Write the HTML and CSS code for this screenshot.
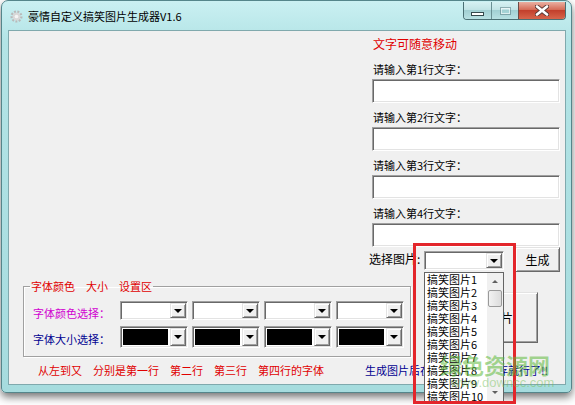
FILE: index.html
```html
<!DOCTYPE html>
<html lang="zh-CN">
<head>
<meta charset="utf-8">
<title>豪情自定义搞笑图片生成器V1.6</title>
<link rel="stylesheet" href="styles.css">
</head>
<body>
<div class="window">
    <div class="titlebar">
        <svg class="appicon" viewBox="0 0 14 14">
            <circle cx="7" cy="7" r="5" fill="none" stroke="#b9b9b9" stroke-width="3" stroke-dasharray="2 1.4"/>
            <circle cx="7" cy="7" r="4.2" fill="#d8d8d8"/>
            <circle cx="7" cy="7" r="2" fill="#f4f4f4"/>
        </svg>
        <span class="title">豪情自定义搞笑图片生成器V1.6</span>
        <div class="caption">
            <div class="cbtn min"><span></span></div>
            <div class="cbtn max"><span></span></div>
            <div class="cbtn close">
                <svg width="14" height="11" viewBox="0 0 14 11">
                    <path d="M2 1.5 L12 9.5 M12 1.5 L2 9.5" stroke="#5a3a36" stroke-width="4.4" stroke-linecap="round"/>
                    <path d="M2 1.5 L12 9.5 M12 1.5 L2 9.5" stroke="#fff" stroke-width="2.6" stroke-linecap="round"/>
                </svg>
            </div>
        </div>
    </div>

    <div class="client">
        <div class="top">
            <div class="canvas"></div>
            <div class="side">
                <p class="hint">文字可随意移动</p>
                <p class="lbl">请输入第1行文字：</p>
                <div class="textbox"></div>
                <p class="lbl">请输入第2行文字：</p>
                <div class="textbox"></div>
                <p class="lbl">请输入第3行文字：</p>
                <div class="textbox"></div>
                <p class="lbl">请输入第4行文字：</p>
                <div class="textbox last"></div>
                <div class="pickrow">
                    <span class="picklbl">选择图片:</span>
                    <div class="combo pick"><div class="field"></div><div class="arrow"></div></div>
                    <div class="btn gen">生成</div>
                </div>
            </div>
        </div>

        <div class="bottom">
            <fieldset class="group">
                <legend>字体颜色　大小　设置区</legend>
                <div class="frow">
                    <span class="flabel color">字体颜色选择：</span>
                    <div class="combo"><div class="field"></div><div class="arrow"></div></div>
                    <div class="combo"><div class="field"></div><div class="arrow"></div></div>
                    <div class="combo"><div class="field"></div><div class="arrow"></div></div>
                    <div class="combo"><div class="field"></div><div class="arrow"></div></div>
                </div>
                <div class="frow size">
                    <span class="flabel sizelbl">字体大小选择：</span>
                    <div class="combo big"><div class="field black"></div><div class="arrow"></div></div>
                    <div class="combo big"><div class="field black"></div><div class="arrow"></div></div>
                    <div class="combo big"><div class="field black"></div><div class="arrow"></div></div>
                    <div class="combo big"><div class="field black"></div><div class="arrow"></div></div>
                </div>
            </fieldset>
            <div class="btn save">保存图片</div>
        </div>

        <div class="notes">
            <span class="note-red">从左到又　分别是第一行　第二行　第三行　第四行的字体</span>
            <span class="note-blue">生成图片后在图片上右键另存就行了!!</span>
        </div>
    </div>

    <!-- open dropdown of 选择图片 -->
    <div class="droplist">
        <ul class="items">
            <li>搞笑图片1</li>
            <li>搞笑图片2</li>
            <li>搞笑图片3</li>
            <li>搞笑图片4</li>
            <li>搞笑图片5</li>
            <li>搞笑图片6</li>
            <li>搞笑图片7</li>
            <li>搞笑图片8</li>
            <li>搞笑图片9</li>
            <li>搞笑图片10</li>
        </ul>
        <div class="sb">
            <div class="sb-up"></div>
            <div class="sb-thumb"></div>
            <div class="sb-down"></div>
        </div>
    </div>
    <div class="highlight"></div>
    <div class="watermark">
        <div class="wm-big">绿色资源网</div>
        <div class="wm-small">www.downcc.com</div>
    </div>
</div>
</body>
</html>
```

FILE: styles.css
```css
* {
    margin: 0;
    padding: 0;
}

html,
body {
    min-height: 405px;
}

body {
    background: #fff;
    font-family: "Noto Sans CJK SC", "Liberation Sans", sans-serif;
    font-size: 11px;
    color: #000;
    overflow: hidden;
}

.window {
    position: relative;
    width: 571px;
    height: 393px;
    margin-left: 1px;
    box-sizing: border-box;
    border: 1px solid #55868b;
    border-radius: 7px 7px 5px 5px;
    background: linear-gradient(#caf0f2, #b3e4e6 40px, #a6dcde);
    box-shadow: 0 4px 8px rgba(0, 0, 0, .55);
}

/* title bar */
.titlebar {
    display: flex;
    align-items: center;
    height: 29px;
    padding-left: 8px;
}

.appicon {
    width: 13px;
    height: 13px;
    margin-right: 5px;
    margin-top: 2px;
}

.title {
    line-height: 14px;
}

.caption {
    display: flex;
    align-self: flex-start;
    margin-left: auto;
    margin-right: 5px;
    margin-top: 1px;
    border: 1px solid #4a6f73;
    border-top: none;
    border-radius: 0 0 4px 4px;
    overflow: hidden;
}

.cbtn {
    height: 17px;
    display: flex;
    align-items: center;
    justify-content: center;
    background: linear-gradient(#d6f1f2, #c2e4e6 45%, #a2d0d3 50%, #b8e1e3);
}

.min {
    width: 27px;
}

.min span {
    width: 11px;
    height: 2px;
    margin-top: 6px;
    background: #fff;
    border: 1px solid #34494c;
}

.max {
    width: 26px;
    border-left: 1px solid #6a9094;
}

.max span {
    width: 9px;
    height: 6px;
    border: 1px solid rgba(70, 105, 110, .45);
    box-shadow: inset 0 0 0 1px rgba(255, 255, 255, .6);
}

.close {
    width: 46px;
    border-left: 1px solid #6b4b47;
    background: linear-gradient(#eab0a2, #d66c57 45%, #c2402c 50%, #d7654b);
}

/* client area */
.client {
    display: flex;
    flex-direction: column;
    height: 355px;
    margin: 0 5px 0 6px;
    box-sizing: border-box;
    border: 1px solid #80a9ad;
    background: #f0f0f0;
}

.top {
    display: flex;
}

.canvas {
    flex: 1;
}

.side {
    width: 188px;
    margin-right: 5px;
    padding-top: 6px;
}

.hint {
    font-size: 12px;
    line-height: 14px;
    color: #e00000;
    margin: 0 0 11px 1px;
}

.lbl {
    line-height: 14px;
    margin: 0 0 3px 1px;
}

.textbox {
    height: 24px;
    margin-bottom: 7px;
    box-sizing: border-box;
    background: #fff;
    border: 1px solid;
    border-color: #a0a0a0 #fff #fff #a0a0a0;
    box-shadow: inset 1px 1px #696969, inset -1px -1px #e3e3e3;
}

.textbox.last {
    margin-bottom: 0;
}

.pickrow {
    display: flex;
    align-items: center;
    height: 25px;
    margin-left: -3px;
}

.picklbl {
    width: 55px;
    font-size: 12px;
    line-height: 14px;
    margin-top: -2px;
}

.combo {
    display: flex;
    width: 68px;
    height: 19px;
    padding: 1px;
    box-sizing: border-box;
    background: #fff;
    border: 1px solid;
    border-color: #a0a0a0 #fff #fff #a0a0a0;
    box-shadow: inset 1px 1px #696969, inset -1px -1px #e3e3e3;
}

.combo.pick {
    width: 80px;
    margin-top: 2px;
}

.combo.big {
    height: 22px;
}

.field {
    flex: 1;
}

.field.black {
    background: #000;
    margin: 1px 2px 1px 1px;
}

.arrow {
    position: relative;
    width: 16px;
    box-sizing: border-box;
    background: #f0f0f0;
    border: 1px solid;
    border-color: #e3e3e3 #696969 #696969 #e3e3e3;
    box-shadow: inset 1px 1px #fff, inset -1px -1px #a0a0a0;
}

.arrow::after {
    content: "";
    position: absolute;
    left: 3px;
    top: 50%;
    margin-top: -2px;
    border-left: 4px solid transparent;
    border-right: 4px solid transparent;
    border-top: 4px solid #000;
}

.btn {
    display: flex;
    align-items: center;
    justify-content: center;
    box-sizing: border-box;
    background: #f0f0f0;
    border: 1px solid;
    border-color: #e3e3e3 #696969 #696969 #e3e3e3;
    box-shadow: inset 1px 1px #fff, inset -1px -1px #a0a0a0;
    font-size: 12px;
}

.gen {
    width: 45px;
    height: 25px;
    margin-left: 11px;
}

/* font settings group */
.bottom {
    display: flex;
    margin-top: 7px;
}

.group {
    width: 388px;
    margin: 0 0 0 14px;
    padding: 0 0 8px 6px;
    box-sizing: border-box;
    border: 1px solid #a0a0a0;
    box-shadow: 1px 1px 0 #fff, inset 1px 1px 0 #fff;
}

.group legend {
    padding: 0 1px;
    line-height: 14px;
    color: #e00000;
}

.frow {
    display: flex;
    align-items: center;
    gap: 4px;
    margin: 8px 0 0 3px;
}

.frow.size {
    margin-top: 6px;
}

.flabel {
    width: 83px;
    line-height: 14px;
    margin-top: 4px;
}

.color {
    color: #d000d0;
}

.sizelbl {
    color: #000090;
}

.save {
    width: 98px;
    height: 51px;
    margin: 13px 0 0 29px;
}

.notes {
    display: flex;
    margin-top: 6px;
    line-height: 14px;
}

.note-red {
    flex: 0 0 327px;
    margin-left: 29px;
    color: #e00000;
}

.note-blue {
    color: #000090;
}

/* overlays */
.droplist {
    position: absolute;
    left: 422px;
    top: 271px;
    width: 80px;
    height: 131px;
    display: flex;
    box-sizing: border-box;
    background: #fff;
    border: 1px solid #646464;
    overflow: hidden;
}

.items {
    flex: 1;
    list-style: none;
    padding-left: 2px;
    line-height: 13px;
}

.sb {
    display: flex;
    flex-direction: column;
    width: 16px;
    background: #f0f0f0;
}

.sb-up,
.sb-down {
    position: relative;
    height: 17px;
}

.sb-up::after,
.sb-down::after {
    content: "";
    position: absolute;
    left: 5px;
    top: 7px;
    border-left: 3px solid transparent;
    border-right: 3px solid transparent;
}

.sb-up::after {
    border-bottom: 3px solid #606060;
}

.sb-down {
    margin-top: auto;
}

.sb-down::after {
    top: 6px;
    border-top: 3px solid #606060;
}

.sb-thumb {
    height: 17px;
    margin: 0 1px;
    box-sizing: border-box;
    border: 1px solid #9a9a9a;
    border-radius: 2px;
    background: linear-gradient(90deg, #f2f2f2, #dcdcdc);
}

.highlight {
    position: absolute;
    left: 411px;
    top: 242px;
    width: 103px;
    height: 161px;
    box-sizing: border-box;
    border: 3px solid #e3262b;
}

.watermark {
    position: absolute;
    left: 438px;
    top: 351px;
    pointer-events: none;
}

.wm-big {
    font-size: 22px;
    font-weight: bold;
    line-height: 24px;
    color: rgba(90, 185, 55, .55);
}

.wm-small {
    margin-left: 11px;
    font-family: "Liberation Sans", sans-serif;
    font-size: 13px;
    line-height: 13px;
    color: rgba(110, 190, 80, .45);
}
```
